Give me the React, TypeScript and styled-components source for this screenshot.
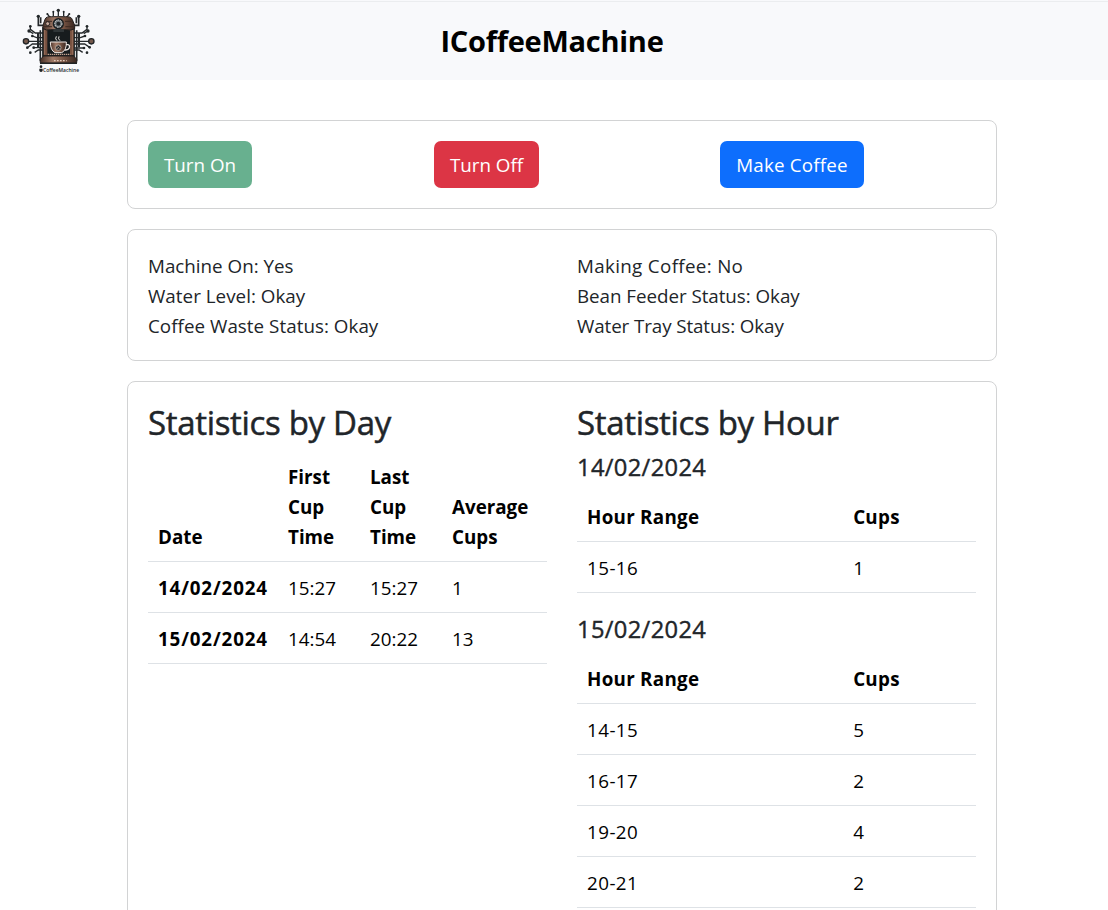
import React from "react";
import styled, { createGlobalStyle } from "styled-components";

const GlobalStyle = createGlobalStyle`
  *, *::before, *::after { box-sizing: border-box; }
  html, body { margin: 0; height: 910px; overflow: hidden; }
  body {
    background: #fff;
    color: #212529;
    font-family: "Segoe UI", "Open Sans", "Noto Sans", sans-serif;
    font-size: 18.8px;
    line-height: 30px;
  }
`;

const Navbar = styled.header`
  display: grid;
  grid-template-columns: 96px 1fr 96px;
  align-items: center;
  height: 80px;
  padding: 0 24px 0 20px;
  background: #f8f9fb;
  box-shadow: inset 0 2px 0 -1px #f8f9fb, inset 0 2px 0 #ebedef;
`;

const Logo = styled.svg`
  display: block;
  width: 76px;
  height: 68px;
  margin-top: 1px;
`;

const Brand = styled.h1`
  margin: 0;
  padding-top: 1px;
  text-align: center;
  color: #000;
  font-size: 29px;
  font-weight: 700;
  line-height: 44px;
  letter-spacing: -0.25px;
`;

const Main = styled.main`
  display: flex;
  flex-direction: column;
  gap: 20px;
  width: 870px;
  margin: 40px 0 0 127px;
`;

const Card = styled.section<{ $columns: number }>`
  display: grid;
  grid-template-columns: repeat(${(p) => p.$columns}, minmax(0, 1fr));
  column-gap: 30px;
  align-items: start;
  padding: 20px;
  border: 1px solid #d2d3d4;
  border-radius: 8px;
`;

const Button = styled.button<{ $color: string; $width: number; $track?: number }>`
  width: ${(p) => p.$width}px;
  height: 47px;
  padding: 0;
  border: 0;
  border-radius: 7px;
  background: ${(p) => p.$color};
  color: #fff;
  font: inherit;
  letter-spacing: ${(p) => p.$track ?? 0}px;
  white-space: nowrap;
  &:disabled { opacity: 0.65; }
`;

const StatusList = styled.div`
  display: flex;
  flex-direction: column;
  padding-top: 1px;
  margin-bottom: -1px;
`;

const Tracked = styled.span<{ $track?: number }>`
  letter-spacing: ${(p) => p.$track ?? 0}px;
  white-space: nowrap;
`;

const Heading = styled.h2`
  margin: 0 0 8px;
  font-size: 33px;
  font-weight: 500;
  line-height: 41px;
  letter-spacing: -0.32px;
  white-space: nowrap;
  -webkit-text-stroke: 0.5px currentColor;
`;

const DayHeading = styled.h3`
  margin: 0 0 9px;
  padding-top: 1px;
  font-size: 23.7px;
  font-weight: 500;
  line-height: 30px;
  letter-spacing: 0.35px;
  -webkit-text-stroke: 0.4px currentColor;
`;

const Table = styled.table`
  width: 100%;
  margin-bottom: 20px;
  table-layout: fixed;
  border-collapse: separate;
  border-spacing: 0;
  color: #000;
  th, td {
    padding: 11px 10px 9px;
    border-bottom: 1px solid #dee2e6;
    text-align: left;
  }
  th { font-weight: 700; white-space: nowrap; }
  tbody th { letter-spacing: 0.85px; }
  thead th { vertical-align: bottom; white-space: normal; }
`;

const HourGrid = styled(Table)`
  thead th { letter-spacing: 0.27px; }
  td { letter-spacing: 0.45px; }
`;

const nodes = [
  [145, 31, 5], [130, 35, 3], [161, 35, 3], [112, 42, 3], [178, 42, 3],
  [85, 49, 5], [206, 49, 5], [61, 79, 4], [231, 79, 4], [57, 93, 5], [234, 93, 5],
  [67, 108, 4], [225, 108, 4], [52, 143, 4], [239, 142, 4], [71, 143, 4], [222, 144, 4],
  [61, 158, 4], [231, 158, 4],
];

const CoffeeLogo = () => (
  <Logo viewBox="30 21 228 204" aria-label="ICoffeeMachine">
    <defs>
      <linearGradient id="copper" x1="0" x2="1">
        <stop offset="0" stopColor="#493229" />
        <stop offset="0.35" stopColor="#a17b68" />
        <stop offset="0.65" stopColor="#765342" />
        <stop offset="1" stopColor="#382822" />
      </linearGradient>
    </defs>
    <g fill="none" stroke="#25292b" strokeWidth="4">
      <path d="M145 31V48M130 35V48M161 35V48M112 42L120 52M178 42L170 52" />
      <path d="M85 49V76H101M206 49V76H190M92 52V70M199 52V70" strokeWidth="5" />
      <path d="M61 79V88L76 99H99M231 79V88L216 99H192M57 93L70 101M234 93L221 101" />
      <path d="M67 108L80 113H99M225 108L211 113H192M48 124H98M193 124H245" />
      <path d="M52 143L67 132H98M239 142L224 132H193M71 143H98M222 144H193M74 157L85 150H98M218 157L207 150H193" />
      <path d="M84 99V142M207 99V142" strokeWidth="6" />
      <path d="M91 91V184M200 91V184" strokeWidth="5" />
    </g>
    <g fill="#222729">
      {nodes.map(([x, y, r]) => <circle key={`${x}-${y}`} cx={x} cy={y} r={r} />)}
    </g>
    <g fill="#75594b" stroke="#202426" strokeWidth="4">
      <circle cx="48" cy="124" r="8" />
      <circle cx="244" cy="124" r="8" />
    </g>
    <path d="M98 82H193V178H98Z" fill="#171c1e" stroke="#1b2022" strokeWidth="3" />
    <path d="M101 88H112V166H101ZM180 88H191V166H180Z" fill="#75503f" />
    <path d="M104 90V164M187 90V164" stroke="#ab806a" strokeWidth="2" />
    <path d="M105 58Q108 49 124 50H167Q184 49 187 59L194 76V86Q183 93 170 89H122Q108 93 99 85V76Z" fill="url(#copper)" stroke="#25211f" strokeWidth="3" />
    <path d="M108 64H126M165 64H184M102 80H126M166 80H190" stroke="#3d2a22" strokeWidth="3" />
    <circle cx="113" cy="71" r="6" fill="#c7aa9d" stroke="#2a2524" strokeWidth="3" />
    <circle cx="145" cy="71" r="17" fill="#1b2022" />
    <circle cx="145" cy="71" r="11" fill="#777f83" stroke="#dedfdf" strokeWidth="3" strokeDasharray="5 3" />
    <circle cx="145" cy="71" r="6" fill="#202527" />
    <path d="M130 87H162V96H130Z" fill="#303638" />
    <path d="M141 122Q134 117 139 109M150 122Q143 117 147 109" fill="none" stroke="#e8e5e2" strokeWidth="3" />
    <path d="M121 126H169Q170 151 155 158H135Q121 151 121 126Z" fill="url(#copper)" stroke="#f0e9e5" strokeWidth="3" />
    <path d="M168 134H174Q180 135 178 143Q175 150 165 150" fill="none" stroke="#f0e9e5" strokeWidth="4" />
    <circle cx="145" cy="143" r="8" fill="#24282a" stroke="#d6c8c0" strokeWidth="2" />
    <path d="M141 139L149 147M149 139L141 147" stroke="#bd9987" strokeWidth="2" />
    <path d="M113 163H181" stroke="#c2a18e" strokeWidth="4" strokeDasharray="4 2" />
    <path d="M101 168H191L200 178V189H91V178Z" fill="url(#copper)" stroke="#272120" strokeWidth="3" />
    <path d="M132 182H170" stroke="#dfc8b9" strokeWidth="4" strokeDasharray="5 4" />
    <path d="M90 190H201" stroke="#202426" strokeWidth="4" />
    <circle cx="93" cy="200" r="4" fill="#202426" />
    <path d="M88 206H98V213Q93 219 88 213Z" fill="#202426" />
    <text x="99" y="215" textLength="108" lengthAdjust="spacingAndGlyphs" fontFamily="Open Sans, sans-serif" fontWeight="600" fontSize="14" fill="#24282a">CoffeeMachine</text>
  </Logo>
);

type HourRow = [string, number];

const HourTable = ({ rows }: { rows: HourRow[] }) => (
  <HourGrid>
    <colgroup><col style={{ width: "66.7%" }} /><col /></colgroup>
    <thead><tr><th>Hour Range</th><th>Cups</th></tr></thead>
    <tbody>
      {rows.map(([range, cups]) => <tr key={range}><td>{range}</td><td>{cups}</td></tr>)}
    </tbody>
  </HourGrid>
);

export default function App() {
  return (
    <>
      <GlobalStyle />
      <Navbar>
        <CoffeeLogo />
        <Brand>ICoffeeMachine</Brand>
      </Navbar>
      <Main>
        <Card $columns={3}>
          <Button $color="#198754" $width={104} disabled>Turn On</Button>
          <Button $color="#dc3545" $width={105}>Turn Off</Button>
          <Button $color="#0d6efd" $width={144} $track={0.17}>Make Coffee</Button>
        </Card>
        <Card $columns={2}>
          <StatusList>
            <Tracked>Machine On: Yes</Tracked>
            <Tracked $track={0.03}>Water Level: Okay</Tracked>
            <Tracked $track={0.04}>Coffee Waste Status: Okay</Tracked>
          </StatusList>
          <StatusList>
            <Tracked $track={0.33}>Making Coffee: No</Tracked>
            <Tracked $track={-0.04}>Bean Feeder Status: Okay</Tracked>
            <Tracked $track={-0.1}>Water Tray Status: Okay</Tracked>
          </StatusList>
        </Card>
        <Card $columns={2}>
          <div>
            <Heading>Statistics by Day</Heading>
            <Table>
              <colgroup>
                <col style={{ width: 130 }} /><col style={{ width: 82 }} /><col style={{ width: 82 }} /><col />
              </colgroup>
              <thead>
                <tr><th>Date</th><th>First Cup Time</th><th>Last Cup Time</th><th>Average Cups</th></tr>
              </thead>
              <tbody>
                <tr><th>14/02/2024</th><td>15:27</td><td>15:27</td><td>1</td></tr>
                <tr><th>15/02/2024</th><td>14:54</td><td>20:22</td><td>13</td></tr>
              </tbody>
            </Table>
          </div>
          <div>
            <Heading>Statistics by Hour</Heading>
            <DayHeading>14/02/2024</DayHeading>
            <HourTable rows={[["15-16", 1]]} />
            <DayHeading>15/02/2024</DayHeading>
            <HourTable rows={[["14-15", 5], ["16-17", 2], ["19-20", 4], ["20-21", 2]]} />
          </div>
        </Card>
      </Main>
    </>
  );
}
